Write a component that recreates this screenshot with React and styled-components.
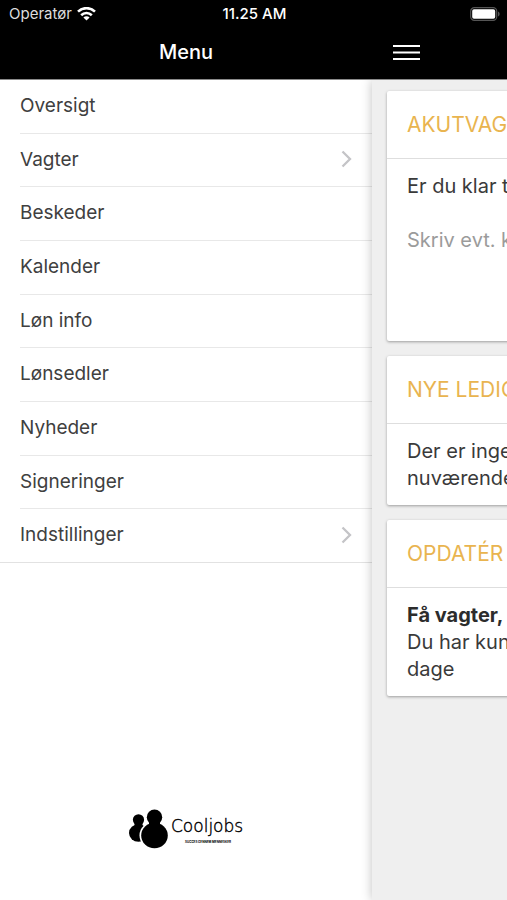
import styled, { createGlobalStyle } from "styled-components";

const menuItems = [
    { title: "Oversigt" },
    { title: "Vagter", more: true },
    { title: "Beskeder" },
    { title: "Kalender" },
    { title: "Løn info" },
    { title: "Lønsedler" },
    { title: "Nyheder" },
    { title: "Signeringer" },
    { title: "Indstillinger", more: true },
];

function StatusBar() {
    return (
        <Status>
            <Carrier>
                Operatør
                <svg width="19" height="14" viewBox="0 0 19 14" fill="none" stroke="#fff" strokeWidth="2.6">
                    <path d="M1 4.6a12.2 12.2 0 0 1 17 0" />
                    <path d="M4.2 8.2a7.6 7.6 0 0 1 10.6 0" />
                    <path d="M9.5 13.6 6.4 10.6a4.4 4.4 0 0 1 6.2 0Z" fill="#fff" stroke="none" />
                </svg>
            </Carrier>
            <Clock>11.25 AM</Clock>
            <Battery>
                <svg width="30" height="14" viewBox="0 0 30 14">
                    <rect x="0.7" y="0.7" width="26" height="12.6" rx="3.6" fill="none" stroke="#555" strokeWidth="1.2" />
                    <rect x="2.2" y="2.2" width="23" height="9.6" rx="1.8" fill="#fff" />
                    <path d="M28 4.6c2.2.8 2.2 4 0 4.8Z" fill="#555" />
                </svg>
            </Battery>
        </Status>
    );
}

function Logo() {
    return (
        <svg width="116" height="42" viewBox="0 0 116 42" role="img" aria-label="Cooljobs">
            <circle cx="10.500" cy="11.800" r="5.600" />
            <path d="M6.500 14h8v5h-8z" />
            <ellipse cx="10.500" cy="25" rx="9.500" ry="8.800" />
            <g fill="#fff">
                <circle cx="26.500" cy="9.300" r="9" />
                <ellipse cx="26.500" cy="27.500" rx="15" ry="14" />
            </g>
            <circle cx="26.500" cy="9.300" r="7.700" />
            <path d="M21 13h11v5H21z" />
            <ellipse cx="26.500" cy="27.500" rx="13.300" ry="12.800" />
            <text x="43" y="24" fontSize="17" fontWeight="200" stroke="#000" strokeWidth="0.4" fontFamily="DejaVu Sans, sans-serif">Cooljobs</text>
            <text x="57" y="35" fontSize="3" fontWeight="700" fontFamily="Inter, sans-serif">SUCCES GENNEM MENNESKER</text>
        </svg>
    );
}

function App() {
    return (
        <Screen>
            <GlobalStyle />
            <Header>
                <StatusBar />
                <NavBar>
                    <Title>Menu</Title>
                    <MenuButton aria-label="Menu">
                        <svg width="27" height="17" viewBox="0 0 27 17" stroke="#fff" strokeWidth="2">
                            <path d="M0 2h27M0 8.500h27M0 15h27" />
                        </svg>
                    </MenuButton>
                </NavBar>
            </Header>
            <Columns>
                <Drawer>
                    <List>
                        {menuItems.map((item) => (
                            <Item key={item.title}>
                                <ItemLink href="#">
                                    {item.title}
                                    {item.more && (
                                        <svg width="11" height="18" viewBox="0 0 11 18" fill="none" stroke="#c4c4c7" strokeWidth="2.3">
                                            <path d="M1.500 1.500 9 9l-7.500 7.500" />
                                        </svg>
                                    )}
                                </ItemLink>
                            </Item>
                        ))}
                    </List>
                    <Brand>
                        <Logo />
                    </Brand>
                </Drawer>
                <Page>
                    <Card>
                        <CardTitle>AKUTVAG</CardTitle>
                        <CardBody>
                            <label htmlFor="comment">Er du klar t</label>
                            <Comment id="comment" placeholder="Skriv evt. k" />
                        </CardBody>
                    </Card>
                    <Card>
                        <CardTitle>NYE LEDIG</CardTitle>
                        <CardBody>
                            Der er inge<br />
                            nuværende
                        </CardBody>
                    </Card>
                    <Card>
                        <CardTitle>OPDATÉR</CardTitle>
                        <CardBody>
                            <b>Få vagter,</b><br />
                            Du har kun<br />
                            dage
                        </CardBody>
                    </Card>
                </Page>
            </Columns>
        </Screen>
    );
}

const GlobalStyle = createGlobalStyle`
    * {
        box-sizing: border-box;
    }
    body {
        margin: 0;
        background: #fff;
        color: #3a3a3a;
        font-family: Inter, "Liberation Sans", sans-serif;
    }
`;
const Screen = styled.div`
    display: flex;
    flex-direction: column;
    min-height: 100vh;
`;
const Header = styled.header`
    background: #000;
    color: #fff;
    border-bottom: 1px solid #8a8a8a;
`;
const Status = styled.div`
    display: grid;
    grid-template-columns: 1fr auto 1fr;
    align-items: center;
    height: 27px;
    padding: 0 7px 0 9px;
    font-size: 15px;
`;
const Carrier = styled.div`
    display: flex;
    align-items: center;
    gap: 5px;
    color: #ddd;
`;
const Clock = styled.div`
    font-weight: 500;
`;
const Battery = styled.div`
    display: flex;
    justify-content: flex-end;
`;
const NavBar = styled.div`
    display: grid;
    grid-template-columns: 1fr 135px;
    align-items: center;
    height: 52px;
    padding-bottom: 2px;
`;
const Title = styled.h1`
    margin: 0;
    font-size: 20px;
    font-weight: 500;
    text-align: center;
`;
const MenuButton = styled.button`
    display: flex;
    justify-self: start;
    margin-left: 14px;
    padding: 7px;
    border: 0;
    background: none;
`;
const Columns = styled.div`
    display: grid;
    grid-template-columns: 1fr 135px;
    flex: 1;
    overflow: hidden;
`;
const Drawer = styled.nav`
    display: flex;
    flex-direction: column;
    justify-content: space-between;
    background: #fff;
`;
const List = styled.ul`
    display: flex;
    flex-direction: column;
    min-height: 483px;
    margin: 0;
    padding: 0;
    list-style: none;
    border-bottom: 1px solid #e2e2e2;
`;
const Item = styled.li`
    display: flex;
    flex: 1;
    margin-left: 20px;
    border-bottom: 1px solid #e8e8e8;
    &:last-child {
        border-bottom: 0;
    }
`;
const ItemLink = styled.a`
    display: flex;
    flex: 1;
    align-items: center;
    justify-content: space-between;
    padding: 0 20px 2px 0;
    color: #404040;
    font-size: 19px;
    text-decoration: none;
`;
const Brand = styled.div`
    display: flex;
    justify-content: center;
    padding-bottom: 50px;
`;
const Page = styled.main`
    display: flex;
    flex-direction: column;
    gap: 15px;
    padding: 11px 0 11px 15px;
    background: #efefef;
    box-shadow: 0 0 10px rgba(0, 0, 0, 0.25);
    white-space: nowrap;
`;
const Card = styled.section`
    width: 320px;
    background: #fff;
    border-radius: 2px;
    box-shadow: 0 1px 3px rgba(0, 0, 0, 0.35);
`;
const CardTitle = styled.h2`
    margin: 0;
    padding: 20px;
    border-bottom: 1px solid #dedede;
    color: #e9b44f;
    font-size: 21px;
    font-weight: 400;
    line-height: 27px;
`;
const CardBody = styled.div`
    padding: 14px 20px 13px;
    font-size: 20px;
    line-height: 27px;
    b {
        color: #2c2c2c;
        font-weight: 700;
    }
`;
const Comment = styled.textarea`
    display: block;
    width: 100%;
    height: 128px;
    padding: 27px 0 0;
    border: 0;
    outline: 0;
    resize: none;
    color: inherit;
    font: inherit;
    &::placeholder {
        color: #9b9b9b;
    }
`;

export default App;
